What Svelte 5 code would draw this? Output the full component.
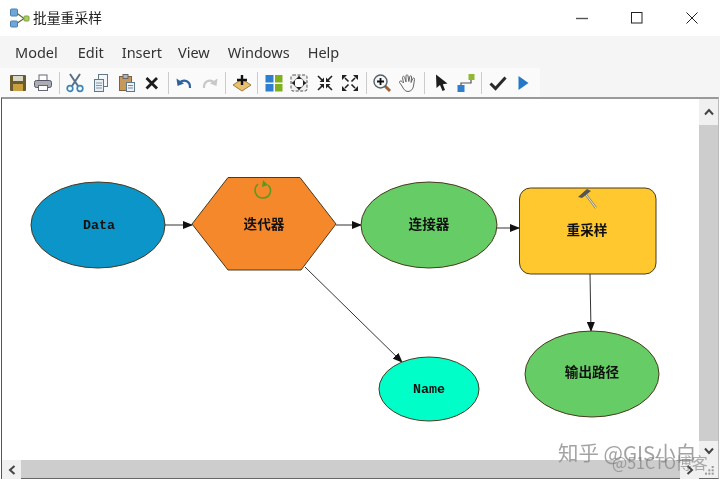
<script>
  const menus = ["Model", "Edit", "Insert", "View", "Windows", "Help"];
  const grip = [[4, 0], [2, 2], [4, 2], [0, 4], [2, 4], [4, 4]];
</script>

<div class="window">
  <header class="titlebar">
    <svg class="app-icon" viewBox="0 0 20 20">
      <path d="M6 4.500L14 10.500L6 16" fill="none" stroke="#5c6a38" stroke-width="1.2" />
      <rect x="0.500" y="1" width="7" height="7" rx="1" fill="#6fa8d8" stroke="#4a80b0" />
      <rect x="0.500" y="13" width="7" height="6" rx="1" fill="#6fa8d8" stroke="#4a80b0" />
      <rect x="14" y="8" width="5" height="5" rx="1" fill="#a8d060" stroke="#80a040" />
    </svg>
    <span class="title">批量重采样</span>
    <div class="controls">
      <svg viewBox="0 0 12 12"><path d="M0 6.500H12" stroke="#555" stroke-width="1.4" /></svg>
      <svg viewBox="0 0 12 12"><rect x="0.500" y="0.500" width="10.500" height="10.500" fill="none" stroke="#222" /></svg>
      <svg viewBox="0 0 12 12"><path d="M0.500 0.500L11.500 11.500M11.500 0.500L0.500 11.500" stroke="#222" /></svg>
    </div>
  </header>

  <nav class="menubar">
    {#each menus as m}
      <span>{m}</span>
    {/each}
  </nav>

  <div class="toolbar">
    <div class="tools">
      <!-- save -->
      <button><svg viewBox="0 0 20 20"><rect x="2" y="2" width="16" height="16" rx="1" fill="#6b5a2c" /><rect x="5" y="3" width="10" height="5" fill="#d8d8c8" /><rect x="5" y="11" width="10" height="7" fill="#c8a040" /></svg></button>
      <!-- print -->
      <button><svg viewBox="0 0 20 20"><rect x="6" y="2" width="8" height="6" fill="#fff" stroke="#667" /><rect x="1.500" y="7.500" width="17" height="7" rx="2" fill="#a8aeb4" stroke="#556" /><rect x="5.500" y="12.500" width="9" height="5" fill="#fff" stroke="#667" /></svg></button>
      <i class="sep"></i>
      <!-- cut -->
      <button><svg viewBox="0 0 20 20"><path d="M5 1L13 13M15 1L7 13" stroke="#5a7088" stroke-width="2" fill="none" /><circle cx="5" cy="15.500" r="2.800" fill="none" stroke="#3f86b8" stroke-width="1.700" /><circle cx="15" cy="15.500" r="2.800" fill="none" stroke="#3f86b8" stroke-width="1.700" /></svg></button>
      <!-- copy -->
      <button><svg viewBox="0 0 20 20"><rect x="7.500" y="1.500" width="9" height="12" fill="#f4f6f8" stroke="#607888" /><rect x="3.500" y="6.500" width="9" height="12" fill="#e8eef4" stroke="#607888" /><path d="M5 10H11M5 12.500H11M5 15H11" stroke="#8098a8" /></svg></button>
      <!-- paste -->
      <button><svg viewBox="0 0 20 20"><rect x="2.500" y="3.500" width="12" height="14" fill="#c89858" stroke="#80603a" /><rect x="6" y="1.500" width="5" height="4" fill="#b0b4b8" stroke="#666" /><rect x="9.500" y="9.500" width="8" height="9" fill="#eef2f6" stroke="#607888" /><path d="M11 12.500H16M11 15H16" stroke="#6a8aa8" /></svg></button>
      <!-- delete -->
      <button><svg viewBox="0 0 20 20"><path d="M4.500 5L15 15.500M15 5L4.500 15.500" stroke="#1c1c1c" stroke-width="2.800" /></svg></button>
      <i class="sep"></i>
      <!-- undo -->
      <button><svg viewBox="0 0 20 20"><path d="M16 15C16.500 8.500 10.500 5.500 5.500 9.500" fill="none" stroke="#2f62a0" stroke-width="2.200" /><path d="M2.500 5.500L3.500 13L10 10.500Z" fill="#2f62a0" /></svg></button>
      <!-- redo -->
      <button><svg viewBox="0 0 20 20"><path d="M4 15C3.500 8.500 9.500 5.500 14.500 9.500" fill="none" stroke="#c8c8c8" stroke-width="2.200" /><path d="M17.500 5.500L16.500 13L10 10.500Z" fill="#c8c8c8" /></svg></button>
      <i class="sep"></i>
      <!-- add data -->
      <button><svg viewBox="0 0 20 20"><path d="M10 6L19 12L10 18L1 12Z" fill="#e8c070" stroke="#a07c3c" /><path d="M10 2V12M5 7H15" stroke="#111" stroke-width="2.400" /></svg></button>
      <i class="sep"></i>
      <!-- auto layout -->
      <button><svg viewBox="0 0 20 20"><rect x="1.500" y="2" width="8" height="7.500" fill="#2f7fd0" /><rect x="11" y="2" width="7.500" height="7.500" fill="#80b020" /><rect x="1.500" y="11" width="8" height="7.500" fill="#2f7fd0" /><rect x="11" y="11" width="7.500" height="7.500" fill="#80b020" /></svg></button>
      <!-- fit -->
      <button><svg viewBox="0 0 20 20"><rect x="2" y="2" width="16" height="16" rx="2" fill="#f0f0f0" stroke="#555" stroke-dasharray="3 1.500" /><circle cx="10" cy="10" r="5" fill="#fff" stroke="#777" /><path d="M10 2.500L7.500 6H12.500ZM10 17.500L7.500 14H12.500ZM2.500 10L6 7.500V12.500ZM17.500 10L14 7.500V12.500Z" fill="#222" /></svg></button>
      <!-- zoom in arrows -->
      <button><svg viewBox="0 0 20 20"><path d="M3 3L8 8M17 3L12 8M3 17L8 12M17 17L12 12" stroke="#222" stroke-width="1.600" /><path d="M9 9H4.500L9 4.500ZM11 9H15.500L11 4.500ZM9 11H4.500L9 15.500ZM11 11H15.500L11 15.500Z" fill="#222" /></svg></button>
      <!-- zoom out arrows -->
      <button><svg viewBox="0 0 20 20"><path d="M5 5L8.500 8.500M15 5L11.500 8.500M5 15L8.500 11.500M15 15L11.500 11.500" stroke="#222" stroke-width="1.600" /><path d="M2 2H7L2 7ZM18 2H13L18 7ZM2 18H7L2 13ZM18 18H13L18 13Z" fill="#222" /></svg></button>
      <i class="sep"></i>
      <!-- magnifier -->
      <button><svg viewBox="0 0 20 20"><path d="M12 12L18 18" stroke="#a06038" stroke-width="3" /><circle cx="8.500" cy="8.500" r="6.500" fill="#f4f8f8" stroke="#586068" stroke-width="1.400" /><path d="M8.500 5V12M5 8.500H12" stroke="#111" stroke-width="1.800" /></svg></button>
      <!-- hand -->
      <button><svg viewBox="0 0 20 20"><path d="M4 13L1.500 9.500C1 8 3 7.500 4 8.500L5.500 10L4.500 4.500C4.500 3 6.200 3 6.600 4.200L8 9L8 2.800C8 1.500 9.800 1.500 10 2.800L10.800 8.500L11.800 3.500C12.200 2.300 13.800 2.600 13.600 4L13 9.500L14.800 5.500C15.400 4.500 16.800 5 16.500 6.300L15.500 13C15 16 13 18.500 10 18.500C7 18.500 5.500 16 4 13Z" fill="#fafafa" stroke="#666" stroke-width="1" /></svg></button>
      <i class="sep"></i>
      <!-- select -->
      <button class="shift"><svg viewBox="0 0 20 20"><path d="M4 1.500L4.500 15L8 12L10.500 18L13 17L10.800 11.200L15.500 10.500Z" fill="#1c1c1c" /></svg></button>
      <!-- connect -->
      <button><svg viewBox="0 0 20 20"><path d="M5 14V10H15V6" fill="none" stroke="#555" stroke-width="1.200" /><rect x="1.500" y="12" width="7" height="7" fill="#2f7fd0" /><rect x="12.500" y="1" width="6" height="6" fill="#90b830" /></svg></button>
      <i class="sep"></i>
      <!-- validate -->
      <button><svg viewBox="0 0 20 20"><path d="M2.500 10.500L7.500 15.500L17.500 4.500" fill="none" stroke="#2a2a2a" stroke-width="3" /></svg></button>
      <!-- run -->
      <button><svg viewBox="0 0 20 20"><path d="M5.500 3L15.500 10L5.500 17Z" fill="#2478c8" /></svg></button>
    </div>
  </div>

  <div class="workspace">
    <div class="canvas">
      <svg class="diagram" viewBox="0 0 697 361">
        <defs>
          <marker id="arrow" markerWidth="10" markerHeight="8" refX="9" refY="4" orient="auto" markerUnits="userSpaceOnUse">
            <path d="M0 0L10 4L0 8Z" fill="#111" />
          </marker>
        </defs>
        <g transform="translate(-2,-99)">
          <path class="edge" d="M165 225H192" marker-end="url(#arrow)" />
          <path class="edge" d="M336 225H361" marker-end="url(#arrow)" />
          <path class="edge" d="M496 228H519" marker-end="url(#arrow)" />
          <path class="edge" d="M590 274L591 331" marker-end="url(#arrow)" />
          <path class="edge" d="M305 267L402 362" marker-end="url(#arrow)" />

          <ellipse class="node" cx="98" cy="225" rx="67" ry="43" fill="#0b95c9" />
          <polygon class="node" points="192,224 228,177.500 300,177.500 336,224 301,270 228,270" fill="#f6882c" />
          <ellipse class="node" cx="429" cy="225" rx="68" ry="43" fill="#66cc66" />
          <rect class="node" x="519.500" y="188" width="136.500" height="86" rx="11" fill="#ffc82e" />
          <ellipse class="node" cx="592" cy="374" rx="67" ry="43" fill="#66cc66" />
          <ellipse class="node" cx="429" cy="389" rx="50" ry="32" fill="#00ffc8" />

          <!-- iterator badge -->
          <path d="M258 184C252 190 256 198 263 198C270 198 273 190 268 185" fill="none" stroke="#5a9a20" stroke-width="1.600" />
          <path d="M263 180L268 185L262 187Z" fill="#5a9a20" />
          <!-- tool badge -->
          <path d="M584 192L596 208" stroke="#8a8570" stroke-width="2.400" />
          <path d="M584 192L596 208" stroke="#f0ead0" stroke-width="1" />
          <path d="M578 197L587 189L591 191L582 198Z" fill="#555" />

          <text class="latin" x="99" y="228.500">Data</text>
          <text class="cjk" x="264" y="228.500">迭代器</text>
          <text class="cjk" x="429" y="228.500">连接器</text>
          <text class="cjk" x="587" y="234.500">重采样</text>
          <text class="cjk" x="592" y="377">输出路径</text>
          <text class="latin" x="429" y="393">Name</text>
        </g>
      </svg>
    </div>
    <div class="vscroll">
      <span class="sbtn up"><svg viewBox="0 0 10 8"><path d="M1 6.500L5 2L9 6.500" fill="none" stroke="#444" stroke-width="2" /></svg></span>
      <span class="track"></span>
      <span class="sbtn down"><svg viewBox="0 0 10 8"><path d="M1 1.500L5 6L9 1.500" fill="none" stroke="#444" stroke-width="2" /></svg></span>
    </div>
    <div class="hscroll">
      <span class="sbtn"><svg viewBox="0 0 8 10"><path d="M6.500 1L2 5L6.500 9" fill="none" stroke="#444" stroke-width="2" /></svg></span>
      <span class="track"></span>
      <span class="sbtn"><svg viewBox="0 0 8 10"><path d="M1.500 1L6 5L1.500 9" fill="none" stroke="#444" stroke-width="2" /></svg></span>
    </div>
    <span class="corner">
      <svg viewBox="0 0 6 6">
        {#each grip as [x, y]}
          <rect {x} {y} width="1.200" height="1.200" fill="#999" />
        {/each}
      </svg>
    </span>
  </div>

  <div class="mark zhihu">知乎 @GIS小白</div>
  <div class="mark cto">@51CTO博客</div>
</div>

<style>
  :global(body) {
    margin: 0;
    background: #fff;
  }
  .window {
    position: relative;
    width: 720px;
    height: 481px;
    overflow: hidden;
    display: flex;
    flex-direction: column;
    font-family: "Noto Sans", "Noto Sans CJK SC", sans-serif;
    color: #222;
    background: #fff;
    filter: blur(0.35px);
  }
  .titlebar {
    height: 36px;
    flex: none;
    display: flex;
    align-items: center;
    padding-left: 10px;
  }
  .app-icon {
    width: 20px;
    height: 20px;
    margin-right: 3px;
  }
  .title {
    font-family: "Noto Sans CJK SC", sans-serif;
    font-size: 13.800px;
    color: #222;
    margin-bottom: 2px;
  }
  .controls {
    margin-left: auto;
    margin-right: 22px;
    display: flex;
    gap: 43px;
  }
  .controls svg {
    width: 12px;
    height: 12px;
  }
  .menubar {
    height: 32px;
    flex: none;
    display: flex;
    align-items: center;
    gap: 18px;
    padding-left: 15px;
    background: #f5f5f5;
    font-size: 14.500px;
    color: #333;
  }
  .menubar span:first-child {
    margin-right: 2px;
  }
  .menubar span:nth-child(3) {
    margin-right: -2px;
  }
  .toolbar {
    height: 29px;
    flex: none;
    background: #f5f5f5;
  }
  .tools {
    width: 540px;
    height: 100%;
    box-sizing: border-box;
    padding-left: 5px;
    display: flex;
    align-items: center;
    background: #fafafa;
  }
  button {
    all: unset;
    width: 25.600px;
    height: 20px;
    display: flex;
    justify-content: center;
  }
  button.shift {
    position: relative;
    left: 1.500px;
  }
  button svg {
    width: 20px;
    height: 20px;
  }
  .sep {
    width: 6.400px;
    height: 22px;
    flex: none;
    background: linear-gradient(#ccc, #ccc) center / 1px 100% no-repeat;
  }
  .workspace {
    flex: 1;
    min-height: 0;
    margin: 0 1px 2px 1px;
    display: grid;
    grid-template-columns: 1fr 19px;
    grid-template-rows: 1fr 18px;
    border-top: 2px solid #9a9a9a;
    border-left: 1px solid #555;
    border-bottom: 1px solid #666;
    border-right: 1px solid #bbb;
  }
  .canvas {
    background: #fff;
    overflow: hidden;
    min-height: 0;
  }
  .diagram {
    display: block;
    width: 100%;
    height: 100%;
  }
  .edge {
    fill: none;
    stroke: #333;
    stroke-width: 1;
  }
  .node {
    stroke: #4a3a20;
    stroke-width: 1;
  }
  text {
    text-anchor: middle;
    fill: #111;
    font-weight: 700;
  }
  .latin {
    font-family: "Liberation Mono", monospace;
    font-size: 13.300px;
  }
  .cjk {
    font-family: "Noto Sans CJK SC", sans-serif;
    font-size: 13.600px;
  }
  .vscroll {
    display: flex;
    flex-direction: column;
    background: #f0f0f0;
  }
  .hscroll {
    display: flex;
    background: #f0f0f0;
  }
  .sbtn {
    flex: none;
    width: 19px;
    height: 19px;
    display: flex;
    align-items: center;
    justify-content: center;
    background: #f0f0f0;
  }
  .sbtn.up {
    height: 26px;
  }
  .sbtn svg {
    width: 10px;
    height: 10px;
  }
  .track {
    flex: 1;
    background: #cdcdcd;
  }
  .corner {
    background: #f0f0f0;
    display: flex;
    align-items: flex-end;
    justify-content: flex-end;
    padding: 0 3px 2px 0;
  }
  .corner svg {
    width: 10px;
    height: 10px;
  }
  .mark {
    position: absolute;
    white-space: nowrap;
    font-family: "Noto Sans CJK SC", sans-serif;
  }
  .zhihu {
    left: 558px;
    top: 439px;
    font-size: 20.500px;
    line-height: 26px;
    color: rgba(140, 140, 140, 0.8);
  }
  .cto {
    left: 612px;
    top: 451px;
    font-size: 16px;
    line-height: 22px;
    color: rgba(110, 110, 110, 0.55);
  }
</style>
